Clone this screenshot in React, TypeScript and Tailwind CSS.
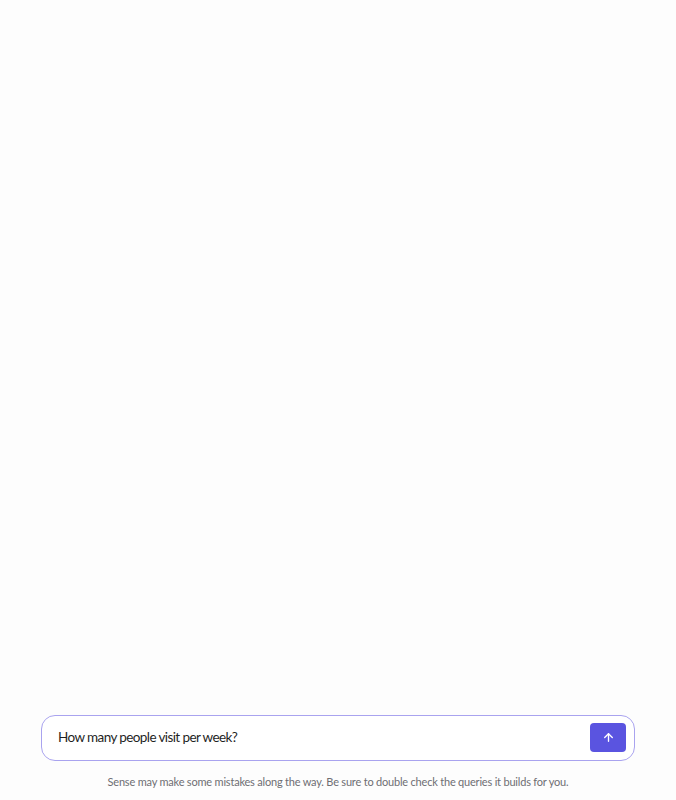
import { ArrowUp } from "lucide-react";

export default function App() {
  return (
    <div
      className="flex h-[800px] w-full flex-col bg-[#fdfdfd]"
      style={{ fontFamily: "Lato, 'Noto Sans', sans-serif" }}
    >
      <div className="flex-1" />

      <div className="px-[41px]">
        <div className="flex h-[46px] items-center rounded-[14px] border border-[#a9a3ef] bg-white pl-[16px] pr-[8px]">
          <input
            className="flex-1 bg-transparent text-[13.5px] tracking-[-0.6px] text-[#1f1f1f] outline-none"
            defaultValue="How many people visit per week?"
          />
          <button className="flex h-[29px] w-[36px] items-center justify-center rounded-[4px] bg-[#5a54e0] text-white">
            <ArrowUp size={13} strokeWidth={2.5} />
          </button>
        </div>
      </div>

      <p className="mt-[13px] mb-[10px] text-center text-[11px] tracking-[-0.2px] text-[#6e6e73]">
        Sense may make some mistakes along the way. Be sure to double check the queries it builds for you.
      </p>
    </div>
  );
}
